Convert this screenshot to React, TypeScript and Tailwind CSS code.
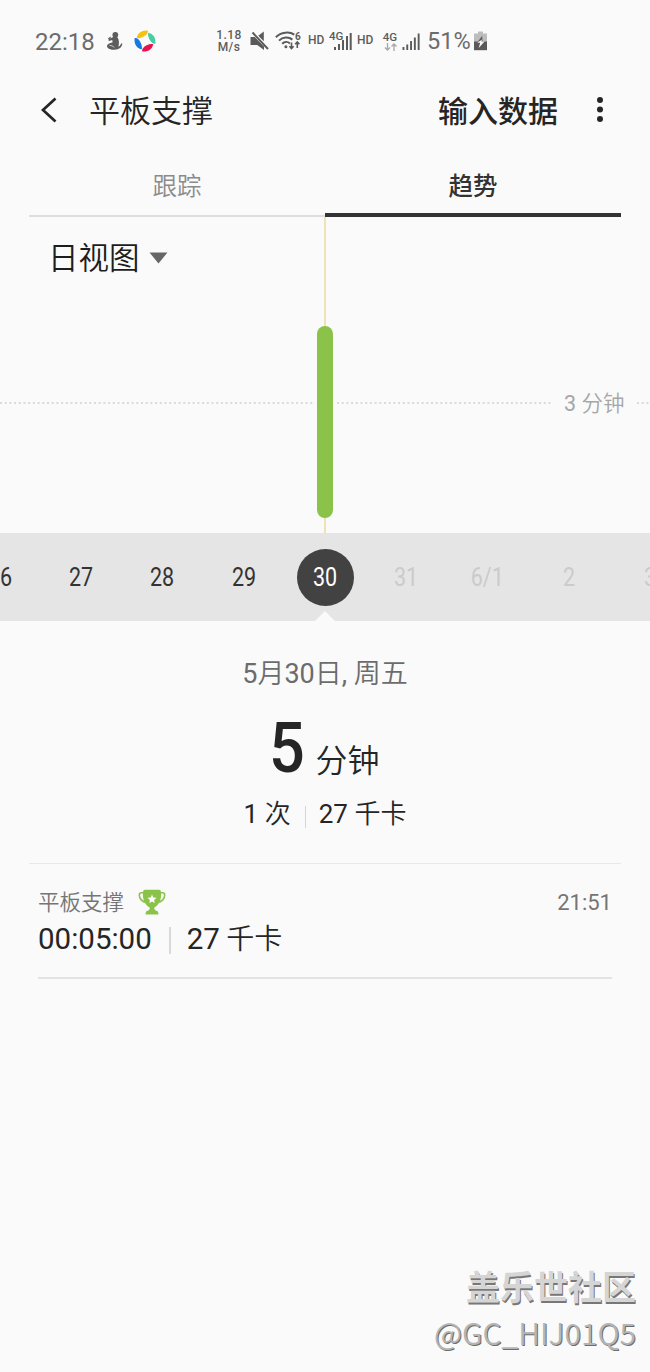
import { clsx } from "clsx";

const days = [
  { label: "26", future: false },
  { label: "27", future: false },
  { label: "28", future: false },
  { label: "29", future: false },
  { label: "30", future: false, selected: true },
  { label: "31", future: true },
  { label: "6/1", future: true },
  { label: "2", future: true },
  { label: "3", future: true },
];

const StretchIcon = () => (
  <svg className="ml-[11px] h-[20px] w-[17px]" viewBox="0 0 17 20" fill="#5d5d5d">
    <circle cx="9.3" cy="3.8" r="2.9" />
    <path d="M6.6 6.2 2.4 8.3 1.9 7.500 4.500 5.500l.5.700L2.200 9l.9 1.100 3.200-1 .2 2.400C3 12.200.8 13.400 1 15.400c.3 2 3.700 3.400 7.500 3.400 4.300 0 7.700-2.400 7.800-6.200l-1.300-.2c-.5 1.700-1.300 2.700-2.600 3.100.9-2.600.8-6.500-.6-8.700-1.200-1.300-3.700-1.300-5.200-.6z" />
    <path d="M3.500 14.300c2 .2 3.500.9 4.800 2.100" stroke="#fafafa" strokeWidth="0.700" fill="none" />
  </svg>
);

const PinwheelIcon = () => (
  <svg className="ml-[11px] h-[22px] w-[22px]" viewBox="0 0 22 22">
    <path d="M2.800 8C3.500 3 8.300-.1 13.800.7c.8 1.700-1.200 4.600-4.400 6C7.200 7.800 4.800 8.600 2.800 8z" fill="#f4c20f" />
    <path d="M14.200 2.800c4.800.7 7.900 5.200 7.200 10.800-1.800.8-4.700-1.200-6-4.300-1-2.300-1.700-4.600-1.200-6.500z" fill="#45cfa0" />
    <path d="M19.200 14.200c-.7 4.900-5.200 7.900-10.900 7.200-.8-1.800 1.200-4.700 4.400-6.100 2.200-.9 4.600-1.600 6.500-1.100z" fill="#e6124e" />
    <path d="M7.800 19.300C3 18.600-.1 14 .6 8.300c1.800-.8 4.700 1.200 6.100 4.400.9 2.200 1.600 4.700 1.100 6.600z" fill="#1677e5" />
  </svg>
);

const MuteIcon = () => (
  <svg className="ml-[8px] h-[20px] w-[19px]" viewBox="0 0 19 20" fill="#5a5a5a">
    <path d="M.5 6h4.200L14 15.500v3.600L7.200 14H.5zM8.300 4.800 13.800.500v9.800z" />
    <path d="m2.500 1.500 15.500 16.500" stroke="#5a5a5a" strokeWidth="2" />
  </svg>
);

const WifiIcon = () => (
  <svg className="ml-[6px] h-[22px] w-[26px]" viewBox="0 0 26 22" fill="none" stroke="#5a5a5a" strokeWidth="2">
    <path d="M.9 7.200C6 1.900 14.500 1.400 19.300 4.600M4 10.600c3.700-3.800 9.700-4 13.400-1M7.200 13.800c2.200-2.200 5.500-2.300 7.700-.4" />
    <circle cx="10.900" cy="16.800" r="1.500" fill="#5a5a5a" stroke="none" />
    <path d="M16.500 12.500v6m-2.100-2.200 2.100 2.300 2.100-2.300M22.300 18v-6m-2.100 2.200 2.100-2.300 2.100 2.300" strokeWidth="1.600" />
    <text x="20" y="9.500" fill="#5a5a5a" stroke="none" className="font-['Roboto'] text-[10px] font-bold">6</text>
  </svg>
);

const CompactSignalIcon = () => (
  <svg className="ml-[4px] h-[22px] w-[23px]" viewBox="0 0 23 22" fill="#5a5a5a">
    <path d="M5 17h2v3H5zM9 14h2v6H9zM13 10h2v10h-2zM17 6h2v14h-2zM20.700 3h2v17h-2z" />
    <text x="0" y="9.800" stroke="#fafafa" strokeWidth="1.500" paintOrder="stroke" className="font-['Roboto'] text-[11.500px] font-medium">4G</text>
  </svg>
);

const SignalIcon = () => (
  <svg className="ml-[4px] h-[22px] w-[18px]" viewBox="0 0 18 22" fill="#5a5a5a">
    <path d="M.5 17h1.900V20H.5zM4.300 14.500h1.900V20H4.300zM8.100 11h1.900v9H8.100zM11.900 7.500h1.900V20h-1.900zM15.700 3.500h1.900V20h-1.900z" />
  </svg>
);

const BatteryIcon = () => (
  <svg className="ml-[3px] h-[20px] w-[13px]" viewBox="0 0 13 20">
    <path d="M4 .500h5v2h4v8.500H0V2.500h4z" fill="#bdbdbd" />
    <path d="M0 10.500h13v8.700H0z" fill="#5a5a5a" />
    <path d="M8.200 4.800 4 10.500h4.500z" fill="#5a5a5a" />
    <path d="M3.300 11.800h2.900L4.700 17l5.800-6.500H7.300l.7-2z" fill="#fafafa" />
  </svg>
);

const StatusBar = () => (
  <div className="flex h-[82px] items-center pl-[35px] text-[#5d5d5d]">
    <span className="w-[60px] pt-px text-[24px] text-[#6c6c6c]">22:18</span>
    <StretchIcon />
    <PinwheelIcon />
    <span className="ml-[60px] w-[26px] text-center text-[12px] leading-[12px] font-medium tracking-[0.4px]">
      1.18
      <br />
      M/s
    </span>
    <MuteIcon />
    <WifiIcon />
    <span className="ml-[7px] w-[17px] pb-[2px] text-[12px] font-medium">HD</span>
    <CompactSignalIcon />
    <span className="ml-[5px] w-[17px] pb-[2px] text-[12px] font-medium">HD</span>
    <span className="ml-[8px] flex w-[16px] flex-col items-center text-[11.500px] leading-[12px] font-medium">
      4G
      <svg className="h-[8px] w-[13px]" viewBox="0 0 13 8" fill="none" stroke="#aaa" strokeWidth="1.400">
        <path d="M3.500 0v7M1 4.500 3.500 7 6 4.500M10 8V1M7.500 3.500 10 1l2.500 2.500" />
      </svg>
    </span>
    <SignalIcon />
    <span className="ml-[7px] w-[44px] pt-[2px] text-[23.500px] text-[#6c6c6c]">51%</span>
    <BatteryIcon />
  </div>
);

const Header = () => (
  <header className="flex h-[56px] items-center pr-[46px] pl-[40px] text-[#252525]">
    <svg className="h-[26px] w-[18px]" viewBox="0 0 18 26" fill="none" stroke="#252525" strokeWidth="2.700">
      <path d="M15.500 1.500 3 13l12.500 11.500" />
    </svg>
    <h1 className="ml-[31px] pt-[5px] text-[31px] font-[350]">平板支撑</h1>
    <button className="ml-auto pt-[2px] text-[30px] font-medium">输入数据</button>
    <svg className="ml-[38px] h-[28px] w-[8px]" viewBox="0 0 8 28" fill="#252525">
      <circle cx="4" cy="4" r="3" />
      <circle cx="4" cy="13.500" r="3" />
      <circle cx="4" cy="23" r="3" />
    </svg>
  </header>
);

const Tabs = () => (
  <nav className="mx-[29px] flex h-[79px] text-[24.500px]">
    <button className="flex-1 border-b-2 border-[#dedede] pt-[22px] font-[350] text-[#8a8a8a]">跟踪</button>
    <button className="flex-1 border-b-4 border-[#333] pt-[24px] font-medium text-[#333]">趋势</button>
  </nav>
);

const Chart = () => (
  <section className="relative h-[316px]">
    <button className="flex items-center pt-[15px] pl-[48px] text-[30.500px] leading-[48px] font-[350] text-[#1d1d1d]">
      <span className="pt-[3px]">日视图</span>
      <svg className="ml-[9px] h-[12px] w-[19px]" viewBox="0 0 19 12" fill="#666">
        <path d="M.5.500h18L9.500 11.500z" />
      </svg>
    </button>
    <svg className="absolute inset-0 h-[316px] w-[650px]" viewBox="0 0 650 316">
      <path d="M325 0v316" stroke="#ebdfa2" strokeWidth="1.600" />
      <path d="M0 186h315M337 186h216M637 186h13" stroke="#cfcfcf" strokeWidth="1.500" strokeDasharray="2 2.700" />
      <rect x="317" y="109" width="16" height="192" rx="8" fill="#8bc34a" />
    </svg>
    <span className="absolute top-[171px] left-[564px] text-[21.500px] leading-[32px] text-[#a6a6a6]">
      3 <span className="font-[350]">分钟</span>
    </span>
  </section>
);

const DateStrip = () => (
  <div className="relative flex h-[88px] justify-center overflow-hidden bg-[#e5e5e5]">
    {days.map(({ label, future, selected }) => (
      <div key={label} className="flex w-[81.3px] shrink-0 items-center justify-center">
        <span
          className={clsx(
            "flex size-[57px] items-center justify-center rounded-full text-[25px]",
            selected && "bg-[#424242] text-white",
            !selected && (future ? "text-[#cbcbcb]" : "text-[#333]"),
          )}
        >
          <span className="scale-x-[0.86] pt-px">{label}</span>
        </span>
      </div>
    ))}
    <svg className="absolute bottom-0 left-[315px] h-[10px] w-[20px]" viewBox="0 0 20 10" fill="#fafafa">
      <path d="M0 10 10 0l10 10z" />
    </svg>
  </div>
);

const Summary = () => (
  <section className="mx-[29px] flex h-[243px] flex-col items-center border-b border-[#e8e8e8] text-[#252525]">
    <p className="mt-[33px] text-[27px] leading-[40px] text-[#6c6c6c]">
      5<span className="font-[350]">月</span>30<span className="font-[350]">日</span>,{" "}
      <span className="font-[350]">周五</span>
    </p>
    <p className="mt-[14px] flex h-[80px] items-baseline pr-[4px]">
      <span className="scale-x-[0.9] text-[70px] leading-[80px] font-medium">5</span>
      <span className="ml-[9px] text-[32px] font-[350]">分钟</span>
    </p>
    <p className="mt-[6px] flex items-center text-[26px] leading-[40px]">
      <span>
        1 <span className="font-[350]">次</span>
      </span>
      <span className="mr-[13px] ml-[14px] mt-[6px] h-[22px] w-px bg-[#d5d5d5]" />
      <span>
        27 <span className="font-[350]">千卡</span>
      </span>
    </p>
  </section>
);

const TrophyIcon = () => (
  <svg className="ml-[14px] h-[27px] w-[28px]" viewBox="0 0 28 27">
    <path d="M6 3.800H3.500Q1.300 3.800 1.300 6C1.300 9.500 4 13 8.500 13.500M22 3.800h2.500q2.200 0 2.200 2.200c0 3.500-2.700 7-7.200 7.500" fill="none" stroke="#8bc34a" strokeWidth="1.600" />
    <path d="M7 .800h14q2 0 2 2C23.500 9.500 22.200 15 16.200 18.800c0 1.600.7 2.700 2 2.900q2.300.3 2.300 3.800h-13q0-3.500 2.300-3.800c1.300-.2 2-1.300 2-2.900C5.800 15 4.500 9.500 5 2.800q0-2 2-2z" fill="#8bc34a" />
    <path d="m14 5.500 1.300 2.900 3.200.4-2.400 2.200.6 3.100-2.700-1.600-2.700 1.600.6-3.100-2.400-2.200 3.200-.4z" fill="#fff" />
  </svg>
);

const Entry = () => (
  <article className="mx-[38px] h-[115px] border-b-2 border-[#e3e3e3] pt-[22px]">
    <div className="flex h-[32px] items-center text-[#757575]">
      <span className="pt-[2px] text-[21.500px] font-[350]">平板支撑</span>
      <TrophyIcon />
      <time className="ml-auto pt-px text-[22px]">21:51</time>
    </div>
    <div className="flex h-[42px] items-center text-[29.500px] text-[#252525]">
      00:05:00
      <span className="mr-[16px] ml-[17px] mt-[3px] h-[27px] w-[2px] bg-[#d9d9d9]" />
      <span>
        27 <span className="-ml-px text-[28px] font-[350]">千卡</span>
      </span>
    </div>
  </article>
);

const Watermark = () => (
  <footer className="mt-auto flex flex-col items-end pr-[14px] pb-[19px] text-[#d5d5d5]">
    <span className="text-[34px] leading-[46px] font-bold [text-shadow:1px_2px_0_#777]">盖乐世社区</span>
    <span className="font-['Noto_Sans_CJK_SC',sans-serif] text-[30px] leading-[42px] font-[350] text-[#b5b5b5] [text-shadow:1px_1px_0_#6d6d6d]">
      @GC_HIJ01Q5
    </span>
  </footer>
);

export default function App() {
  return (
    <main className="flex h-[1372px] w-[650px] flex-col overflow-hidden bg-[#fafafa] font-['Roboto','Noto_Sans_CJK_SC',sans-serif]">
      <StatusBar />
      <Header />
      <Tabs />
      <Chart />
      <DateStrip />
      <Summary />
      <Entry />
      <Watermark />
    </main>
  );
}
